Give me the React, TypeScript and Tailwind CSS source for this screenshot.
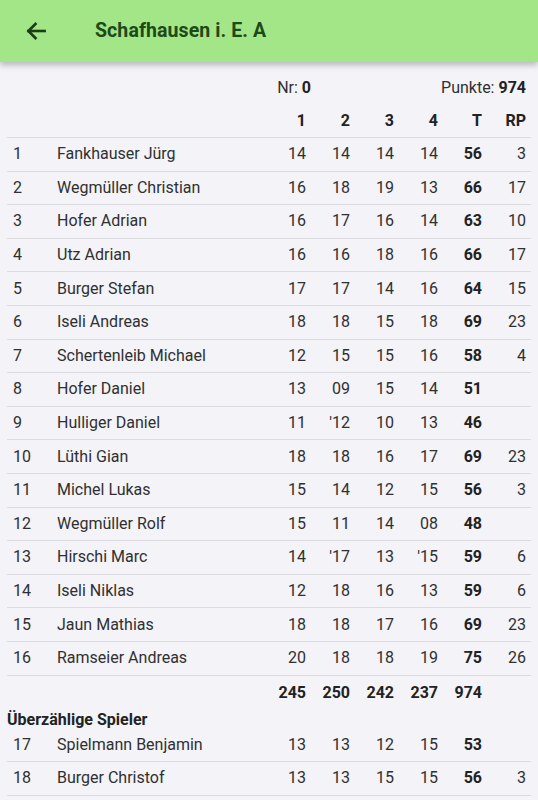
import React from "react";

type Row = [string, string, string, string, string, string, string, string];

const rows: Row[] = [
  ["1", "Fankhauser Jürg", "14", "14", "14", "14", "56", "3"],
  ["2", "Wegmüller Christian", "16", "18", "19", "13", "66", "17"],
  ["3", "Hofer Adrian", "16", "17", "16", "14", "63", "10"],
  ["4", "Utz Adrian", "16", "16", "18", "16", "66", "17"],
  ["5", "Burger Stefan", "17", "17", "14", "16", "64", "15"],
  ["6", "Iseli Andreas", "18", "18", "15", "18", "69", "23"],
  ["7", "Schertenleib Michael", "12", "15", "15", "16", "58", "4"],
  ["8", "Hofer Daniel", "13", "09", "15", "14", "51", ""],
  ["9", "Hulliger Daniel", "11", "'12", "10", "13", "46", ""],
  ["10", "Lüthi Gian", "18", "18", "16", "17", "69", "23"],
  ["11", "Michel Lukas", "15", "14", "12", "15", "56", "3"],
  ["12", "Wegmüller Rolf", "15", "11", "14", "08", "48", ""],
  ["13", "Hirschi Marc", "14", "'17", "13", "'15", "59", "6"],
  ["14", "Iseli Niklas", "12", "18", "16", "13", "59", "6"],
  ["15", "Jaun Mathias", "18", "18", "17", "16", "69", "23"],
  ["16", "Ramseier Andreas", "20", "18", "18", "19", "75", "26"],
];

const extra: Row[] = [
  ["17", "Spielmann Benjamin", "13", "13", "12", "15", "53", ""],
  ["18", "Burger Christof", "13", "13", "15", "15", "56", "3"],
];

const grid = "grid grid-cols-[50px_1fr_44px_44px_44px_44px_44px_44px] items-center";

function DataRow({ r }: { r: Row }) {
  return (
    <div className={`${grid} h-[33.6px] border-b border-[#dcdce1]`}>
      <div className="pl-[6px]">{r[0]}</div>
      <div className="whitespace-nowrap">{r[1]}</div>
      <div className="text-right pr-[5px]">{r[2]}</div>
      <div className="text-right pr-[5px]">{r[3]}</div>
      <div className="text-right pr-[5px]">{r[4]}</div>
      <div className="text-right pr-[5px]">{r[5]}</div>
      <div className="text-right pr-[5px] font-bold text-[#222]">{r[6]}</div>
      <div className="text-right pr-[5px]">{r[7]}</div>
    </div>
  );
}

export default function App() {
  return (
    <div
      className="min-h-[800px] w-[538px] bg-[#f3f3f8] text-[#303030] text-[16px] overflow-hidden"
      style={{ fontFamily: "Roboto, 'Noto Sans', sans-serif" }}
    >
      <div className="h-[62px] bg-[#a2e687] flex items-center shadow-[0_3px_6px_rgba(0,0,0,0.25)] relative z-10">
        <div className="w-[72px] flex items-center pl-[23px]">
          <svg width="26" height="26" viewBox="0 0 24 24" fill="none" stroke="#1b3d17" strokeWidth="2.4" strokeLinecap="square">
            <path d="M20 12H5" />
            <path d="M11.5 5.5L5 12l6.5 6.5" />
          </svg>
        </div>
        <div className="pl-[23px] text-[19.5px] font-bold text-[#1d4a18] tracking-[0.1px]">Schafhausen i. E. A</div>
      </div>

      <div className="mx-[7px] pt-[9px]">
        <div className={`${grid} h-[34px]`}>
          <div className="col-span-3 text-right">
            Nr: <span className="font-bold text-[#222]">0</span>
          </div>
          <div className="col-span-5 text-right pr-[5px]">
            Punkte: <span className="font-bold text-[#222]">974</span>
          </div>
        </div>
        <div className={`${grid} h-[33px] border-b border-[#dcdce1] font-bold text-[#222]`}>
          <div></div>
          <div></div>
          <div className="text-right pr-[5px]">1</div>
          <div className="text-right pr-[5px]">2</div>
          <div className="text-right pr-[5px]">3</div>
          <div className="text-right pr-[5px]">4</div>
          <div className="text-right pr-[5px]">T</div>
          <div className="text-right pr-[5px]">RP</div>
        </div>
        {rows.map((r) => (
          <DataRow key={r[0]} r={r} />
        ))}
        <div className={`${grid} h-[34px] font-bold text-[#222]`}>
          <div></div>
          <div></div>
          <div className="text-right pr-[5px]">245</div>
          <div className="text-right pr-[5px]">250</div>
          <div className="text-right pr-[5px]">242</div>
          <div className="text-right pr-[5px]">237</div>
          <div className="text-right pr-[5px]">974</div>
          <div></div>
        </div>
        <div className="h-[19px] leading-[19px] font-bold text-[#222]">Überzählige Spieler</div>
        {extra.map((r) => (
          <DataRow key={r[0]} r={r} />
        ))}
      </div>
    </div>
  );
}
